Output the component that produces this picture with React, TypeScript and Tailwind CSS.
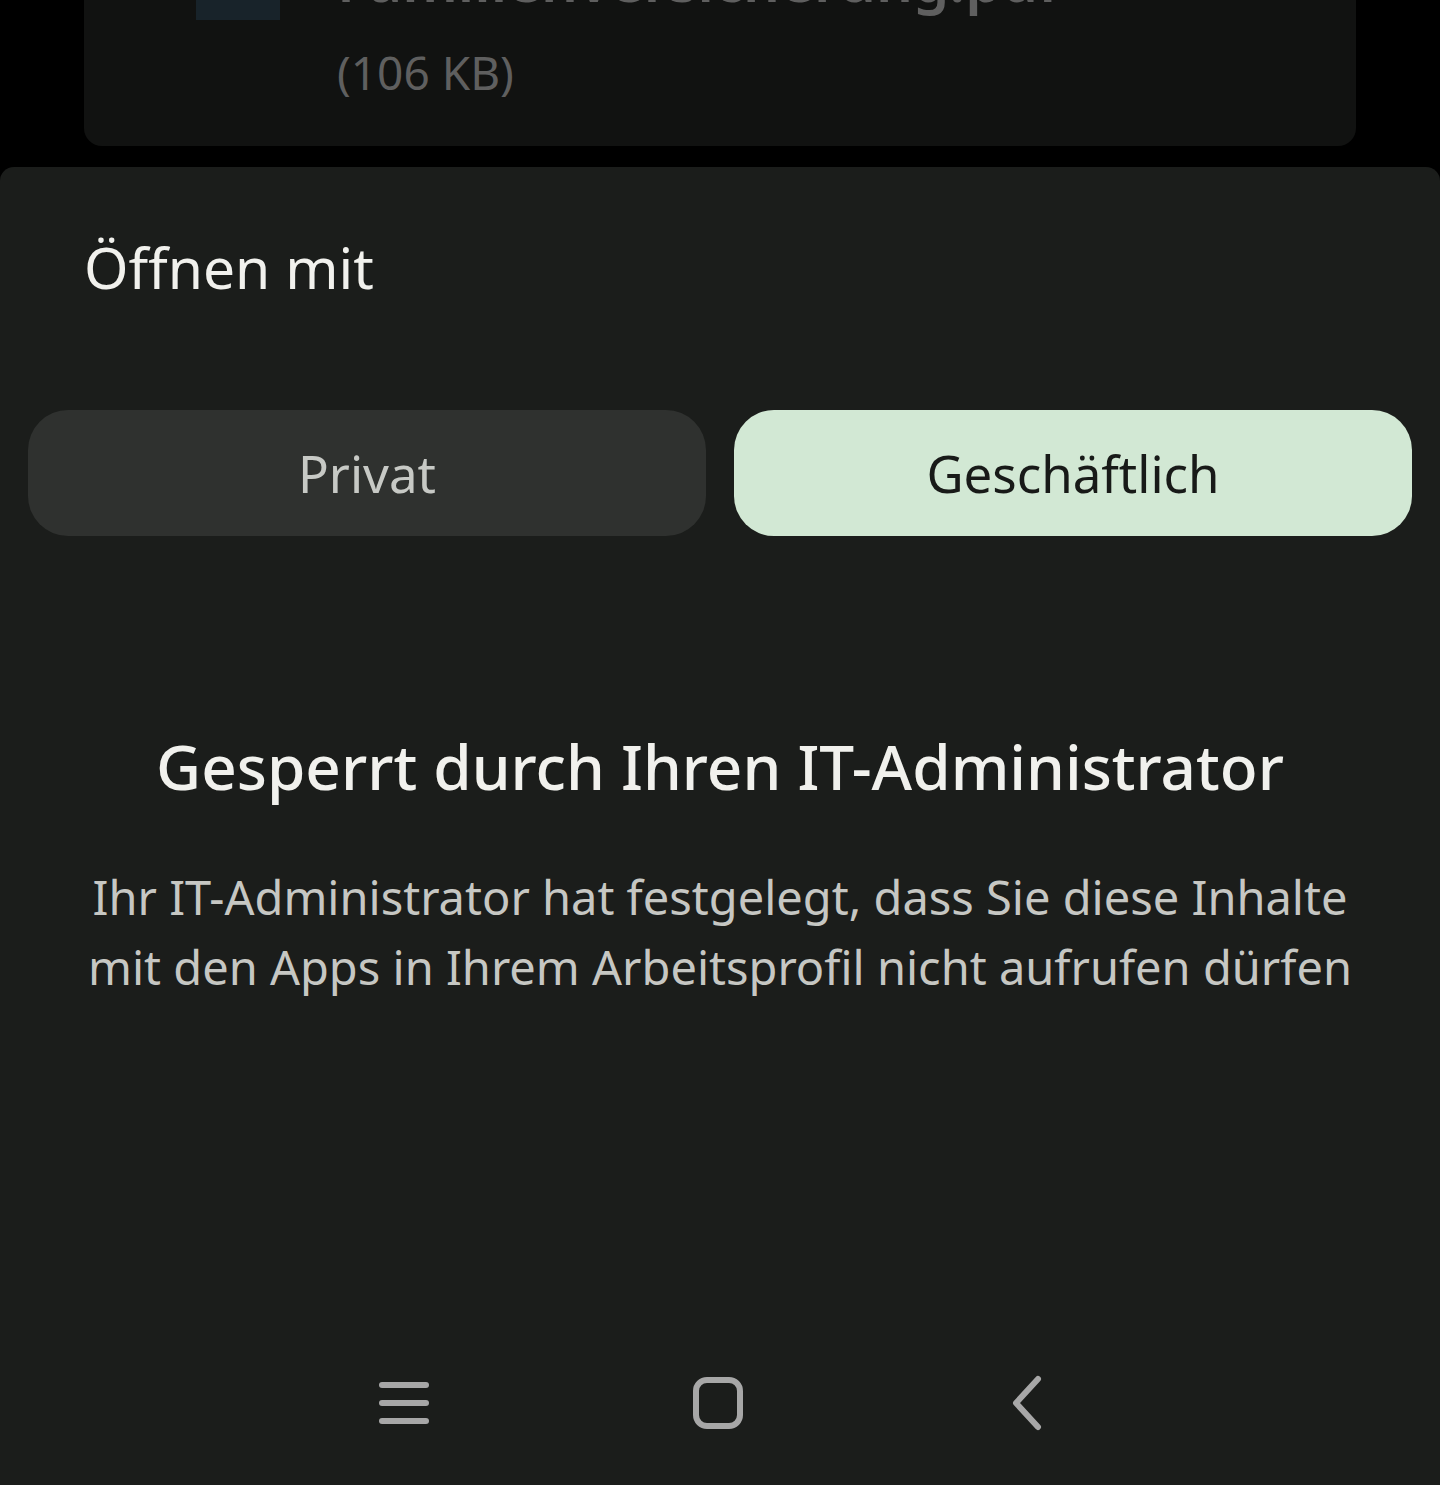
import React from 'react';

const font = { fontFamily: '"Noto Sans", Roboto, sans-serif' };

const NavBar: React.FC = () => (
  <div className="flex items-center justify-center h-[120px] gap-[262px] pr-[16px]">
    <svg width="52" height="48" viewBox="0 0 52 48" className="text-[#a7a7a7]">
      <g stroke="currentColor" strokeWidth="6" strokeLinecap="round">
        <line x1="4" y1="6" x2="48" y2="6" />
        <line x1="4" y1="24" x2="48" y2="24" />
        <line x1="4" y1="42" x2="48" y2="42" />
      </g>
    </svg>
    <svg width="52" height="54" viewBox="0 0 52 54" className="text-[#a7a7a7]">
      <rect x="4" y="4" width="44" height="46" rx="11" fill="none" stroke="currentColor" strokeWidth="6" />
    </svg>
    <svg width="40" height="56" viewBox="0 0 40 56" className="text-[#a7a7a7]">
      <path d="M32 4 L10 28 L32 52" fill="none" stroke="currentColor" strokeWidth="6" strokeLinecap="round" strokeLinejoin="round" />
    </svg>
  </div>
);

export default function App() {
  return (
    <div className="w-[1440px] h-[1485px] bg-black flex flex-col overflow-hidden" style={font}>
      {/* file card behind the sheet */}
      <div className="mx-[84px] h-[146px] shrink-0 bg-[#111211] rounded-b-[18px] overflow-hidden">
        <div className="flex items-start gap-[57px] pl-[112px] -mt-[60px]">
          <div className="w-[84px] h-[80px] bg-[#18232a] shrink-0" />
          <div className="flex flex-col">
            <span className="text-[58px] leading-[80px] font-semibold text-[#5f5f5f]">Familienversicherung.pdf</span>
            <span className="text-[46px] leading-[72px] text-[#5f5f5f] mt-[16px]">(106 KB)</span>
          </div>
        </div>
      </div>

      {/* bottom sheet */}
      <div className="mt-[21px] flex-1 bg-[#1b1d1b] rounded-t-[14px] flex flex-col">
        <h1 className="pl-[84px] pt-[64px] text-[57px] leading-[72px] text-[#f1f1ed]">Öffnen mit</h1>

        <div className="grid grid-cols-2 gap-[28px] px-[28px] mt-[107px]">
          <button className="h-[126px] rounded-[40px] bg-[#2f312f] text-[#c7c9c5] text-[51px]">Privat</button>
          <button className="h-[126px] rounded-[40px] bg-[#d2e8d4] text-[#181a18] text-[51px]">Geschäftlich</button>
        </div>

        <h2 className="mt-[190px] text-center text-[62px] leading-[80px] text-[#f1f1ed] font-medium">
          Gesperrt durch Ihren IT-Administrator
        </h2>
        <p className="mt-[56px] mx-auto w-[1300px] text-center text-[47px] leading-[70px] text-[#c6c7c3]">
          Ihr IT-Administrator hat festgelegt, dass Sie diese Inhalte mit den Apps in Ihrem Arbeitsprofil nicht aufrufen dürfen
        </p>

        <div className="flex-1" />
        <div className="mb-[22px]">
          <NavBar />
        </div>
      </div>
    </div>
  );
}
